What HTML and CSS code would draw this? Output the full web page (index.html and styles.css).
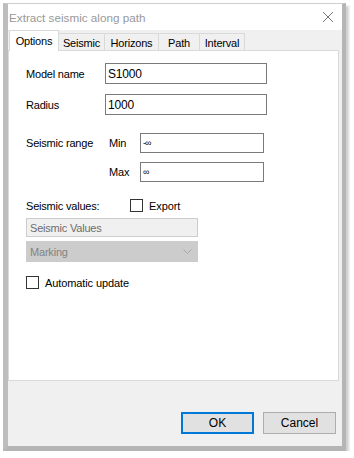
FILE: index.html
```html
<!DOCTYPE html>
<html lang="en">
<head>
<meta charset="UTF-8" />
<title>Extract seismic along path</title>
<link rel="stylesheet" href="styles.css">
</head>
<body>
  <div class="window" role="dialog" aria-label="Extract seismic along path">
    <div class="titlebar">
      <span class="title">Extract seismic along path</span>
      <svg class="close" width="12" height="12" viewBox="0 0 12 12" aria-hidden="true">
        <path d="M1 1 L11 11 M11 1 L1 11" stroke="#7a7a7a" stroke-width="1" fill="none"/>
      </svg>
    </div>

    <div class="client">
      <div class="tabs">
        <div class="tab active">Options</div>
        <div class="tab tab-seismic">Seismic</div>
        <div class="tab tab-horizons">Horizons</div>
        <div class="tab tab-path">Path</div>
        <div class="tab tab-interval">Interval</div>
      </div>

      <div class="panel">
        <div class="row row-name">
          <span class="label">Model name</span>
          <div class="textbox wide">S1000</div>
        </div>
        <div class="row row-radius">
          <span class="label">Radius</span>
          <div class="textbox wide">1000</div>
        </div>

        <div class="range">
          <span class="label range-label">Seismic range</span>
          <span class="label">Min</span>
          <div class="textbox short"><span class="inf">-∞</span></div>
          <span class="label range-max">Max</span>
          <div class="textbox short"><span class="inf">∞</span></div>
        </div>

        <div class="row row-values">
          <span class="label values-label">Seismic values:</span>
          <span class="checkbox"></span>
          <span class="check-text">Export</span>
        </div>
        <div class="textbox disabled">Seismic Values</div>
        <div class="combo">
          <span>Marking</span>
          <svg width="9" height="6" viewBox="0 0 9 6" aria-hidden="true">
            <path d="M0.5 0.5 L4.5 4.5 L8.5 0.5" stroke="#a8a8a8" stroke-width="1" fill="none"/>
          </svg>
        </div>

        <div class="row row-auto">
          <span class="checkbox"></span>
          <span class="check-text">Automatic update</span>
        </div>
      </div>

      <div class="footer">
        <button class="btn primary">OK</button>
        <button class="btn">Cancel</button>
      </div>
    </div>
  </div>
</body>
</html>
```

FILE: styles.css
```css
* {
  box-sizing: border-box;
}
body, html {
  margin: 0;
  padding: 0;
  background: #fff;
  font-family: "Liberation Sans", Arial, sans-serif;
  font-size: 11px;
  color: #000;
}

/* Dialog frame */
.window {
  margin: 3px 0 0 3px;
  width: 343px;
  height: 448px;
  border-top: 1px solid #cfcfcf;
  border-left: 5px solid #bdbdbd;
  border-right: 4px solid #b5b5b5;
  border-bottom: 5px solid #b5b5b5;
  box-shadow: 3px 3px 2px rgba(0,0,0,0.18);
  background: #f0f0f0;
  display: flex;
  flex-direction: column;
}

.titlebar {
  height: 26px;
  background: #fff;
  display: flex;
  align-items: center;
  justify-content: space-between;
  padding: 1px 8px 0 1px;
}
.title {
  font-size: 11.7px;
  color: #999;
}
.close {
  margin-top: -1px;
}

.client {
  flex: 1;
  display: flex;
  flex-direction: column;
}

/* Tabs */
.tabs {
  height: 20px;
  display: flex;
  align-items: flex-end;
  padding-left: 1px;
  position: relative;
  z-index: 2;
}
.tab {
  height: 17px;
  border-top: 1px solid #d9d9d9;
  border-right: 1px solid #d9d9d9;
  display: flex;
  align-items: center;
  justify-content: center;
  letter-spacing: -0.2px;
  padding-top: 1px;
}
.tab.active {
  width: 50px;
  height: 21px;
  margin-bottom: -1px;
  background: #fff;
  border-left: 1px solid #d9d9d9;
  padding-bottom: 2px;
}
.tab-seismic { width: 46px; }
.tab-horizons { width: 54px; }
.tab-path { width: 41px; }
.tab-interval { width: 45px; }

.panel {
  height: 331px;
  margin-right: 3px;
  background: #fff;
  border: 1px solid #d9d9d9;
  padding: 12px 0 0 17px;
  display: flex;
  flex-direction: column;
  align-items: flex-start;
}

.label {
  letter-spacing: -0.2px;
}

.row {
  display: flex;
  align-items: center;
}
.row-name .label,
.row-radius .label {
  width: 79px;
}
.row-radius {
  margin-top: 10px;
}

.textbox {
  height: 21px;
  border: 1px solid #7a7a7a;
  background: #fff;
  padding: 0 0 0 2px;
  display: flex;
  align-items: center;
  letter-spacing: -0.2px;
}
.textbox.wide {
  width: 162px;
  font-size: 12px;
}
.textbox.short {
  width: 124px;
  height: 20px;
}
.inf {
  font-size: 9px;
  letter-spacing: -1px;
}

.range {
  margin-top: 18px;
  display: grid;
  grid-template-columns: 83px 31px 124px;
  grid-template-rows: 20px 20px;
  row-gap: 9px;
  align-items: center;
}
.range-max {
  grid-column: 2;
}

.row-values {
  margin-top: 17px;
  height: 13px;
}
.values-label {
  width: 104px;
}
.checkbox {
  width: 13px;
  height: 13px;
  border: 1px solid #333;
  background: #fff;
}
.check-text {
  margin-left: 6px;
  letter-spacing: -0.1px;
}

.textbox.disabled {
  margin-top: 6px;
  width: 172px;
  height: 19px;
  border-color: #cccccc;
  background: #f0f0f0;
  color: #6d6d6d;
  padding-left: 3px;
}
.combo {
  margin-top: 4px;
  width: 172px;
  height: 21px;
  background: #cccccc;
  color: #838383;
  display: flex;
  align-items: center;
  justify-content: space-between;
  padding: 0 6px 0 4px;
  letter-spacing: -0.2px;
}

.row-auto {
  margin-top: 14px;
  height: 13px;
}

/* Buttons */
.footer {
  flex: 1;
  display: flex;
  justify-content: flex-end;
  align-items: flex-start;
  gap: 9px;
  padding: 31px 6px 0 0;
}
.btn {
  width: 73px;
  height: 22px;
  margin: 0;
  padding: 0;
  background: #e1e1e1;
  border: 1px solid #adadad;
  font-family: "Liberation Sans", Arial, sans-serif;
  font-size: 12px;
  color: #000;
}
.btn.primary {
  border: 2px solid #0078d7;
}
```
